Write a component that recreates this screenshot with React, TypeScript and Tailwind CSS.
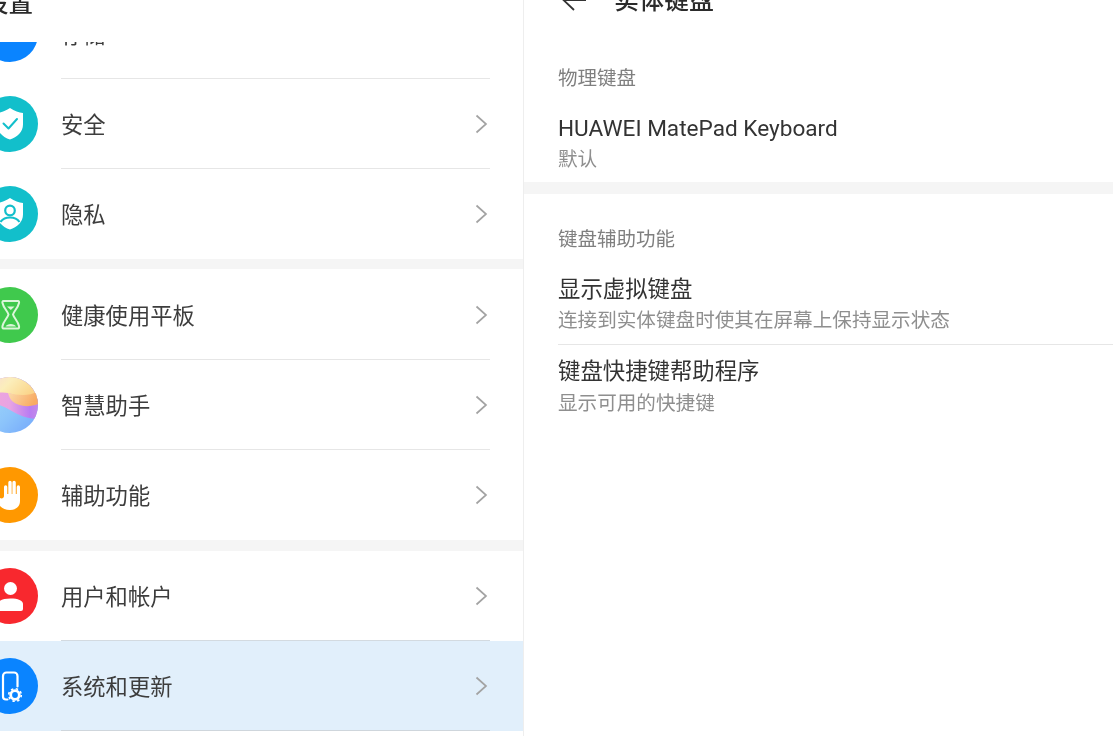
import React from "react";

const font = { fontFamily: '"Noto Sans CJK SC", "Noto Sans", sans-serif' };

const shieldPath = "M28 12 C32.5 15 37 16.5 41 17 V28.5 C41 36 35 41 28 43.5 C21 41 15 36 15 28.5 V17 C19 16.5 23.5 15 28 12Z";

const Circle = ({ color, children }: { color: string; children?: React.ReactNode }) => (
  <svg width="56" height="56" viewBox="0 0 56 56" className="shrink-0">
    <circle cx="28" cy="28" r="28" fill={color} />
    {children}
  </svg>
);

const Orb = () => (
  <svg width="56" height="56" viewBox="0 0 56 56" className="shrink-0">
    <defs>
      <clipPath id="orb"><circle cx="28" cy="28" r="28" /></clipPath>
      <linearGradient id="orbTop" x1="0" y1="0" x2="1" y2="0.4">
        <stop offset="0" stopColor="#f9d7d9" />
        <stop offset="0.5" stopColor="#fbeebb" />
        <stop offset="1" stopColor="#fbd58a" />
      </linearGradient>
      <linearGradient id="orbOrange" x1="0" y1="0" x2="1" y2="0.3">
        <stop offset="0" stopColor="#fbdcae" />
        <stop offset="1" stopColor="#f8ab63" />
      </linearGradient>
      <linearGradient id="orbMid" x1="0" y1="0" x2="1" y2="0">
        <stop offset="0" stopColor="#f6a6d6" />
        <stop offset="0.5" stopColor="#e7a3e3" />
        <stop offset="0.85" stopColor="#b97cf2" />
        <stop offset="1" stopColor="#c389e8" />
      </linearGradient>
      <linearGradient id="orbLow" x1="0" y1="0" x2="1" y2="1">
        <stop offset="0" stopColor="#a7dff7" />
        <stop offset="0.6" stopColor="#8cc4fb" />
        <stop offset="1" stopColor="#71a5fb" />
      </linearGradient>
    </defs>
    <g clipPath="url(#orb)">
      <rect width="56" height="56" fill="url(#orbLow)" />
      <path d="M0 0 H56 V42 C46 42 36 38 28 33 C18 27 8 25 0 27Z" fill="url(#orbMid)" />
      <path d="M0 0 H56 V20 C46 26 36 18 26 16 C16 14 8 18 0 22Z" fill="url(#orbTop)" />
      <path d="M26 16 C36 18 46 20 56 14 V27 C46 31 36 29 30 24 C28 22 27 19 26 16Z" fill="url(#orbOrange)" />
    </g>
  </svg>
);

const icons: Record<string, React.ReactNode> = {
  storage: <Circle color="#0a84ff" />,
  security: (
    <Circle color="#12bfcb">
      <path d={shieldPath} fill="#fff" />
      <path d="M21.5 27.5 L26.5 32.5 L35 23" fill="none" stroke="#12bfcb" strokeWidth="2" strokeLinecap="round" strokeLinejoin="round" />
    </Circle>
  ),
  privacy: (
    <Circle color="#12bfcb">
      <path d={shieldPath} fill="#fff" />
      <circle cx="28" cy="24.5" r="4.8" fill="none" stroke="#12bfcb" strokeWidth="2.2" />
      <path d="M18.5 36 C20.5 33 24 31.5 28 31.5 C32 31.5 35.5 33 37.5 36" fill="none" stroke="#12bfcb" strokeWidth="2.2" />
    </Circle>
  ),
  health: (
    <Circle color="#40c94d">
      <path
        d="M21.5 14 H36 C37 14 37.3 15 37 16 C36 21 32 24 31 27.5 C32 31 36 34 37 39 C37.3 40.5 37 41.5 36 41.5 H21.5 C20.5 41.5 20.2 40.5 20.5 39 C21.5 34 25.5 31 26.5 27.5 C25.5 24 21.5 21 20.5 16 C20.2 15 20.5 14 21.5 14Z"
        fill="none"
        stroke="#dcf6da"
        strokeWidth="2"
        strokeLinejoin="round"
      />
      <path d="M25 19.5 H32.5 L28.8 23Z" fill="#dcf6da" />
      <path d="M23.5 39.5 C25 36 32.5 36 34 39.5Z" fill="#dcf6da" />
    </Circle>
  ),
  assistant: <Orb />,
  access: (
    <Circle color="#ff9800">
      <path
        d="M22 29 V20 a1.65 1.65 0 0 1 3.3 0 V27 H26.3 V15.5 a1.7 1.7 0 0 1 3.4 0 V27 H30.4 V15.5 a1.7 1.7 0 0 1 3.4 0 V27 H34.7 V20 a1.65 1.65 0 0 1 3.3 0 V34 C38 39.5 34 43 28 43 C22 43 18.5 40 15 35.5 L11 31 C9.5 29 12 27.5 14 28.5 L18 31 C20 32 22 31 22 29Z"
        fill="#fff"
      />
    </Circle>
  ),
  user: (
    <Circle color="#f8282e">
      <circle cx="28.5" cy="20.5" r="6.5" fill="#fff" />
      <path d="M16 41 V36 C16 32.5 21 30.5 28.5 30.5 C36 30.5 41 32.5 41 36 V41 a2 2 0 0 1 -2 2 H18 a2 2 0 0 1 -2 -2Z" fill="#fff" />
    </Circle>
  ),
  system: (
    <Circle color="#0a84ff">
      <path d="M25.5 41.5 H24 a3 3 0 0 1 -3 -3 V18 a3.5 3.5 0 0 1 3.5 -3.5 H32 a3.5 3.5 0 0 1 3.5 3.5 V28.5" fill="none" stroke="#fff" strokeWidth="2.2" strokeLinecap="round" />
      <circle cx="33" cy="37" r="4.3" fill="none" stroke="#fff" strokeWidth="2.8" />
      <circle cx="33" cy="37" r="6.3" fill="none" stroke="#fff" strokeWidth="1.6" strokeDasharray="2.4 2.55" />
    </Circle>
  ),
};

const Chevron = ({ hidden = false }: { hidden?: boolean }) => (
  <svg width="14" height="20" viewBox="0 0 14 20" className={hidden ? "invisible shrink-0" : "shrink-0"}>
    <path d="M2.5 1.5 L12 10 L2.5 18.5" fill="none" stroke="#a3a3a3" strokeWidth="1.7" />
  </svg>
);

const Row = ({
  icon,
  label,
  line = true,
  active = false,
  chevronHidden = false,
  lineColor = "border-[#e6e6e6]",
}: {
  icon: string;
  label: string;
  line?: boolean;
  active?: boolean;
  chevronHidden?: boolean;
  lineColor?: string;
}) => (
  <div className={`flex h-[90px] shrink-0 items-center gap-[23px] -ml-[18px] pr-[33px] ${active ? "bg-[#e1effb]" : ""}`}>
    {icons[icon]}
    <div className={`flex h-full flex-1 items-center justify-between pr-[2px] ${line ? `border-b ${lineColor}` : ""}`}>
      <span className="pb-[2px] text-[22.3px] leading-[30px] text-[#3d3d3d]">{label}</span>
      <Chevron hidden={chevronHidden} />
    </div>
  </div>
);

const Gap = ({ h }: { h: string }) => <div className={`${h} shrink-0 bg-[#f5f5f5]`} />;

const Detail = ({ title, sub, latin = false, tall = false }: { title: string; sub: string; latin?: boolean; tall?: boolean }) => (
  <div className="flex flex-col">
    <span
      className={`${tall ? "h-[31px]" : "h-[30px]"} text-[#333333] ${latin ? "text-[22.6px] leading-[32px]" : "text-[22.4px] leading-[26px]"}`}
      style={latin ? { fontFamily: 'Roboto, "Noto Sans CJK SC", sans-serif' } : undefined}
    >
      {title}
    </span>
    <span className="h-[30px] text-[19.6px] leading-[30px] text-[#8f8f8f]">{sub}</span>
  </div>
);

export default function App() {
  return (
    <div className="flex h-[736px] w-[1113px] overflow-hidden bg-white blur-[0.5px]" style={font}>
      <div className="flex h-full w-[523px] shrink-0 flex-col overflow-hidden">
        <div className="h-[42px] shrink-0">
          <div className="-ml-[16px] -mt-[15px] h-[34px] text-[24.5px] font-medium leading-[34px] text-[#2b2b2b]">设置</div>
        </div>
        <div className="flex flex-1 flex-col overflow-hidden">
          <div className="-mt-[53px] flex flex-col">
            <Row icon="storage" label="存储" chevronHidden />
            <Row icon="security" label="安全" />
            <Row icon="privacy" label="隐私" line={false} />
            <Gap h="h-[10px]" />
            <div className="h-px shrink-0" />
            <Row icon="health" label="健康使用平板" />
            <Row icon="assistant" label="智慧助手" />
            <Row icon="access" label="辅助功能" line={false} />
            <Gap h="h-[11px]" />
            <Row icon="user" label="用户和帐户" lineColor="border-[#d3dae0]" />
            <Row icon="system" label="系统和更新" active lineColor="border-[#cfd6dc]" />
          </div>
        </div>
      </div>

      <div className="flex h-full flex-1 flex-col border-l border-[#eeeeee]">
        <div className="-mt-[20px] flex h-[80px] shrink-0 items-start pl-[38px]">
          <div className="flex h-[40px] items-center gap-[28px]">
            <svg width="24" height="24" viewBox="0 0 24 24" className="shrink-0">
              <path d="M24 12 H2 M12 2 L1.5 12 L12 22" fill="none" stroke="#333333" strokeWidth="1.8" />
            </svg>
            <span className="pb-[4px] text-[25px] font-medium leading-[36px] text-[#2b2b2b]">实体键盘</span>
          </div>
        </div>
        <div className="h-[34px] shrink-0 pl-[34px] text-[19.5px] leading-[33px] text-[#7f7f7f]">物理键盘</div>
        <div className="shrink-0 pb-[9px] pl-[34px] pt-[19px]">
          <Detail title="HUAWEI MatePad Keyboard" sub="默认" latin />
        </div>
        <Gap h="h-[12px]" />
        <div className="mt-[27px] h-[34px] shrink-0 pl-[34px] text-[19.5px] leading-[33px] text-[#7f7f7f]">键盘辅助功能</div>
        <div className="ml-[34px] mt-[19px] shrink-0 border-b border-[#e6e6e6] pb-[10px]">
          <Detail title="显示虚拟键盘" sub="连接到实体键盘时使其在屏幕上保持显示状态" />
        </div>
        <div className="ml-[34px] shrink-0 pt-[11px]">
          <Detail title="键盘快捷键帮助程序" sub="显示可用的快捷键" tall />
        </div>
      </div>
    </div>
  );
}
